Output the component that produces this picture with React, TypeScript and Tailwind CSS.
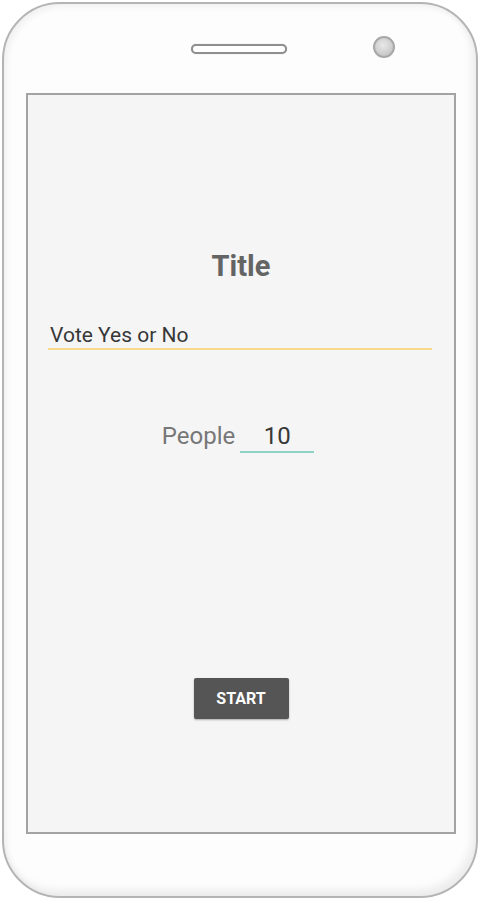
import React from "react";

export default function App() {
  return (
    <div className="w-[480px] h-[900px] bg-white" style={{ fontFamily: "Roboto, 'Noto Sans', sans-serif" }}>
      <div className="w-[476px] h-[896px] ml-[2px] mt-[2px] rounded-[58px] border-2 border-[#b4b4b4] bg-[#fdfdfd] shadow-[inset_-4px_-6px_8px_rgba(0,0,0,0.07),inset_3px_3px_6px_rgba(0,0,0,0.05)] flex flex-col">
        <div className="h-[89px] flex items-start">
          <div className="ml-[187px] mt-[40px] w-[96px] h-[10px] rounded-full border-2 border-[#8f8f8f] bg-white shadow-[0_0_1px_rgba(0,0,0,0.3)]" />
          <div className="ml-[86px] mt-[32px] w-[22px] h-[22px] rounded-full border-2 border-[#a8a8a8] bg-[radial-gradient(circle_at_45%_40%,#e8e8e8,#bcbcbc)]" />
        </div>
        <div className="ml-[22px] w-[430px] h-[741px] border-2 border-[#a3a3a3] bg-[#f5f5f5] flex flex-col">
          <div className="mt-[154px] h-[34px] leading-[34px] text-center text-[29px] font-bold text-[#646464]">
            Title
          </div>
          <div className="mt-[39px] ml-[20px] w-[384px] border-b-2 border-[#f8d98c]">
            <div className="pl-[2px] leading-[26px] text-[21px] text-[#383838]">Vote Yes or No</div>
          </div>
          <div className="mt-[71px] flex justify-center items-start gap-[5px] pr-[6px]">
            <div className="leading-[30px] text-[24px] text-[#777777]">People</div>
            <div className="w-[74px] border-b-2 border-[#8fd3c7] text-center leading-[30px] text-[24px] text-[#383838]">
              10
            </div>
          </div>
          <div className="mt-[225px] flex justify-center">
            <div className="w-[95px] h-[41px] rounded-[2px] bg-[#555555] shadow-[0_1px_2px_rgba(0,0,0,0.3)] flex items-center justify-center text-[16px] font-bold text-white">
              START
            </div>
          </div>
        </div>
      </div>
    </div>
  );
}
